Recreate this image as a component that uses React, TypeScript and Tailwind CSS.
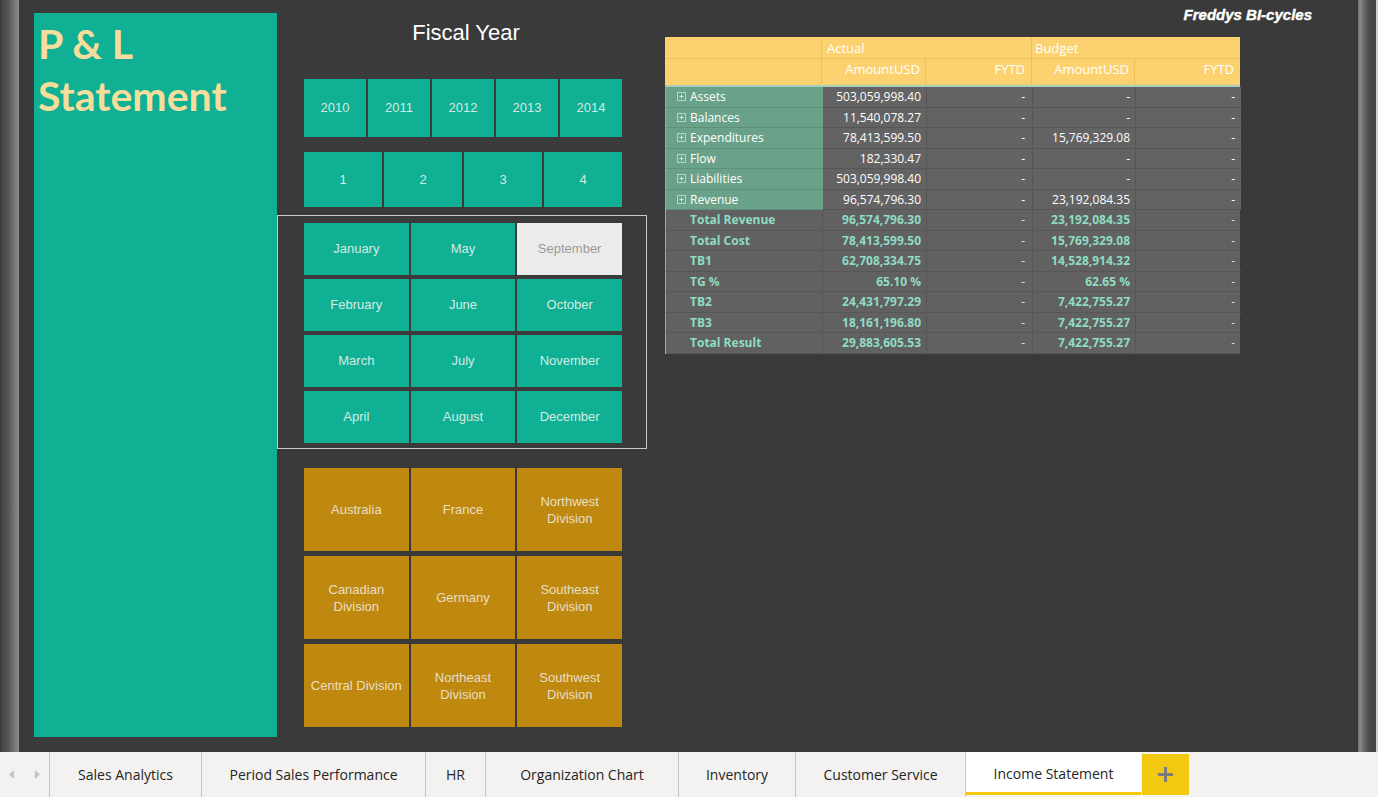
const years = ["2010", "2011", "2012", "2013", "2014"];
const quarters = ["1", "2", "3", "4"];
const months = [
  "January", "May", "September",
  "February", "June", "October",
  "March", "July", "November",
  "April", "August", "December",
];
const regions = [
  "Australia", "France", "Northwest Division",
  "Canadian Division", "Germany", "Southeast Division",
  "Central Division", "Northeast Division", "Southwest Division",
];

const accounts = [
  { label: "Assets", actual: "503,059,998.40", budget: "-" },
  { label: "Balances", actual: "11,540,078.27", budget: "-" },
  { label: "Expenditures", actual: "78,413,599.50", budget: "15,769,329.08" },
  { label: "Flow", actual: "182,330.47", budget: "-" },
  { label: "Liabilities", actual: "503,059,998.40", budget: "-" },
  { label: "Revenue", actual: "96,574,796.30", budget: "23,192,084.35" },
];

const totals = [
  { label: "Total Revenue", actual: "96,574,796.30", budget: "23,192,084.35" },
  { label: "Total Cost", actual: "78,413,599.50", budget: "15,769,329.08" },
  { label: "TB1", actual: "62,708,334.75", budget: "14,528,914.32" },
  { label: "TG %", actual: "65.10 %", budget: "62.65 %" },
  { label: "TB2", actual: "24,431,797.29", budget: "7,422,755.27" },
  { label: "TB3", actual: "18,161,196.80", budget: "7,422,755.27" },
  { label: "Total Result", actual: "29,883,605.53", budget: "7,422,755.27" },
];

const tabs = [
  { name: "Sales Analytics", w: "w-[152px]" },
  { name: "Period Sales Performance", w: "w-[224px]" },
  { name: "HR", w: "w-[60px]" },
  { name: "Organization Chart", w: "w-[193px]" },
  { name: "Inventory", w: "w-[117px]" },
  { name: "Customer Service", w: "w-[170px]" },
];

function ExpandIcon() {
  return (
    <svg width="9" height="9" viewBox="0 0 9 9" className="shrink-0">
      <rect x="0.5" y="0.5" width="8" height="8" fill="none" stroke="#b9d3c7" strokeWidth="1" />
      <path d="M2.5 4.5h4M4.5 2.5v4" stroke="#d8e8e0" strokeWidth="1" />
    </svg>
  );
}

function Slicers() {
  return (
    <div className="w-[370px] flex flex-col font-['Liberation_Sans',Arial,sans-serif]">
      <div className="mt-[20px] h-[26px] pl-[8px] text-center text-[22px] leading-[26px] text-white">
        Fiscal Year
      </div>

      {/* Years */}
      <div className="mt-[33px] ml-[27px] w-[318px] h-[58px] grid grid-cols-5 gap-x-[2px]">
        {years.map((y) => (
          <div key={y} className="bg-[#0fb093] flex items-center justify-center text-[13px] text-[#d6ebe3]">
            {y}
          </div>
        ))}
      </div>

      {/* Quarters */}
      <div className="mt-[15px] ml-[27px] w-[318px] h-[55px] grid grid-cols-4 gap-x-[2px]">
        {quarters.map((q) => (
          <div key={q} className="bg-[#0fb093] flex items-center justify-center text-[13px] text-[#d6ebe3]">
            {q}
          </div>
        ))}
      </div>

      {/* Months */}
      <div className="mt-[8px] h-[234px] border border-[#c9c9c9] pt-[7px] pl-[26px]">
        <div className="w-[318px] grid grid-cols-3 gap-x-[2px] gap-y-[4px] auto-rows-[52px]">
          {months.map((m) =>
            m === "September" ? (
              <div key={m} className="bg-[#ebebeb] flex items-center justify-center text-[13px] text-[#9a9a9a]">
                {m}
              </div>
            ) : (
              <div key={m} className="bg-[#0fb093] flex items-center justify-center text-[13px] text-[#d6ebe3]">
                {m}
              </div>
            )
          )}
        </div>
      </div>

      {/* Regions */}
      <div className="mt-[19px] ml-[27px] w-[318px] grid grid-cols-3 gap-x-[2px] gap-y-[5px] auto-rows-[83px]">
        {regions.map((r) => (
          <div key={r} className="bg-[#bf880e] flex items-center justify-center text-center px-[5px] text-[13px] leading-[17px] text-[#eadfc6]">
            {r}
          </div>
        ))}
      </div>
    </div>
  );
}

function Matrix() {
  const cols = "grid grid-cols-[157px_104px_106px_103px_105px]";
  return (
    <div className="w-[575px] font-['Open_Sans',sans-serif]">
      {/* Header */}
      <div className="bg-[#fcd271] text-white text-[13px]">
        <div className={`${cols} h-[22px] border-b border-[#eebf5c]`}>
          <div className="border-r border-[#eebf5c]" />
          <div className="col-span-2 border-r border-[#eebf5c] pl-[5px] leading-[22px]">Actual</div>
          <div className="col-span-2 pl-[3px] leading-[22px]">Budget</div>
        </div>
        <div className={`${cols} h-[26px]`}>
          <div className="border-r border-[#eebf5c]" />
          <div className="border-r border-[#eebf5c] pr-[5px] text-right leading-[21px]">AmountUSD</div>
          <div className="border-r border-[#eebf5c] pr-[6px] text-right leading-[21px]">FYTD</div>
          <div className="border-r border-[#eebf5c] pr-[5px] text-right leading-[21px]">AmountUSD</div>
          <div className="pr-[6px] text-right leading-[21px]">FYTD</div>
        </div>
      </div>

      {/* Body */}
      <div className="border-t-2 border-[#a8cfc0] border-l border-l-[#86a9c7] text-[12px]">
        {accounts.map((r) => (
          <div key={r.label} className={`${cols} h-[20.5px] leading-[19.5px]`}>
            <div className="bg-[#6aa189] border-b border-[#5f9179] flex items-center gap-[4px] pl-[11px] text-white">
              <ExpandIcon />
              <span>{r.label}</span>
            </div>
            <div className="bg-[#636363] border-b border-r border-[#565656] pr-[5px] text-right text-white">{r.actual}</div>
            <div className="bg-[#636363] border-b border-r border-[#565656] pr-[7px] text-right text-white">-</div>
            <div className="bg-[#636363] border-b border-r border-[#565656] pr-[5px] text-right text-white">{r.budget}</div>
            <div className="bg-[#636363] border-b border-[#565656] pr-[6px] text-right text-white">-</div>
          </div>
        ))}
        {totals.map((r) => (
          <div key={r.label} className={`${cols} h-[20.5px] leading-[19.5px] bg-[#616161]`}>
            <div className="border-b border-r border-[#565656] pl-[24px] font-bold text-[#8fdcc3]">{r.label}</div>
            <div className="border-b border-r border-[#565656] pr-[5px] text-right font-bold text-[#8fdcc3]">{r.actual}</div>
            <div className="border-b border-r border-[#565656] pr-[7px] text-right text-[#dddddd]">-</div>
            <div className="border-b border-r border-[#565656] pr-[5px] text-right font-bold text-[#8fdcc3]">{r.budget}</div>
            <div className="border-b border-[#565656] pr-[6px] text-right text-[#dddddd]">-</div>
          </div>
        ))}
      </div>
    </div>
  );
}

function TabBar() {
  return (
    <div className="h-[45px] bg-[#f3f2f1] flex font-['Open_Sans',sans-serif] text-[14px] text-[#252423]">
      <div className="w-[50px] border-r border-[#c8c6c4] flex items-center justify-between px-[9px]">
        <svg width="5" height="9" viewBox="0 0 5 9">
          <path d="M5 0L0 4.5L5 9z" fill="#c4c4c4" />
        </svg>
        <svg width="5" height="9" viewBox="0 0 5 9">
          <path d="M0 0L5 4.5L0 9z" fill="#c4c4c4" />
        </svg>
      </div>
      {tabs.map((t) => (
        <div key={t.name} className={`${t.w} border-r border-[#c8c6c4] flex items-center justify-center`}>
          {t.name}
        </div>
      ))}
      <div className="w-[175px] mb-[2px] bg-white border-b-[3px] border-[#f2c811] flex items-center justify-center pt-[2px]">
        Income Statement
      </div>
      <div className="w-[47px] my-[2px] ml-[1px] bg-[#f2c811] flex items-center justify-center">
        <svg width="15" height="15" viewBox="0 0 15 15">
          <path d="M6 0h3v6h6v3h-6v6h-3v-6h-6v-3h6z" fill="#7b7b7b" />
        </svg>
      </div>
    </div>
  );
}

export default function App() {
  return (
    <div className="w-[1378px] h-[797px] flex flex-col bg-[#3a3a3a] overflow-hidden">
      <div className="h-[752px] flex">
        {/* left frame edge */}
        <div className="w-[20px] bg-[linear-gradient(to_right,#3a3a3a_0px,#454545_2px,#5a5a5a_9px,#858585_17px,#8a8a8a_19px,#3a3a3a_19.5px)]" />

        <div className="flex-1 flex">
          {/* Title tile */}
          <div className="ml-[14px] mt-[13px] w-[243px] h-[724px] bg-[#0fb093] pl-[4px] pt-[5px] font-['Lato',sans-serif] font-bold text-[41px] leading-[52px] text-[#f7dd9c]">
            <div>P &amp; L</div>
            <div>Statement</div>
          </div>

          <Slicers />

          <div className="ml-[18px] flex-1 flex flex-col">
            <div className="h-[37px] pt-[4px] pr-[46px] text-right font-['Liberation_Sans',Arial,sans-serif] font-bold italic text-[15px] text-white [-webkit-text-stroke:0.4px_white]">
              Freddys BI-cycles
            </div>
            <Matrix />
          </div>
        </div>

        {/* right frame edge */}
        <div className="w-[20px] bg-[linear-gradient(to_right,#6e6e6e_0px,#8a8a8a_2px,#5a5a5a_8px,#474747_12px,#444444_18px,#cfcfcf_18.5px,#cfcfcf_20px)]" />
      </div>
      <TabBar />
    </div>
  );
}
